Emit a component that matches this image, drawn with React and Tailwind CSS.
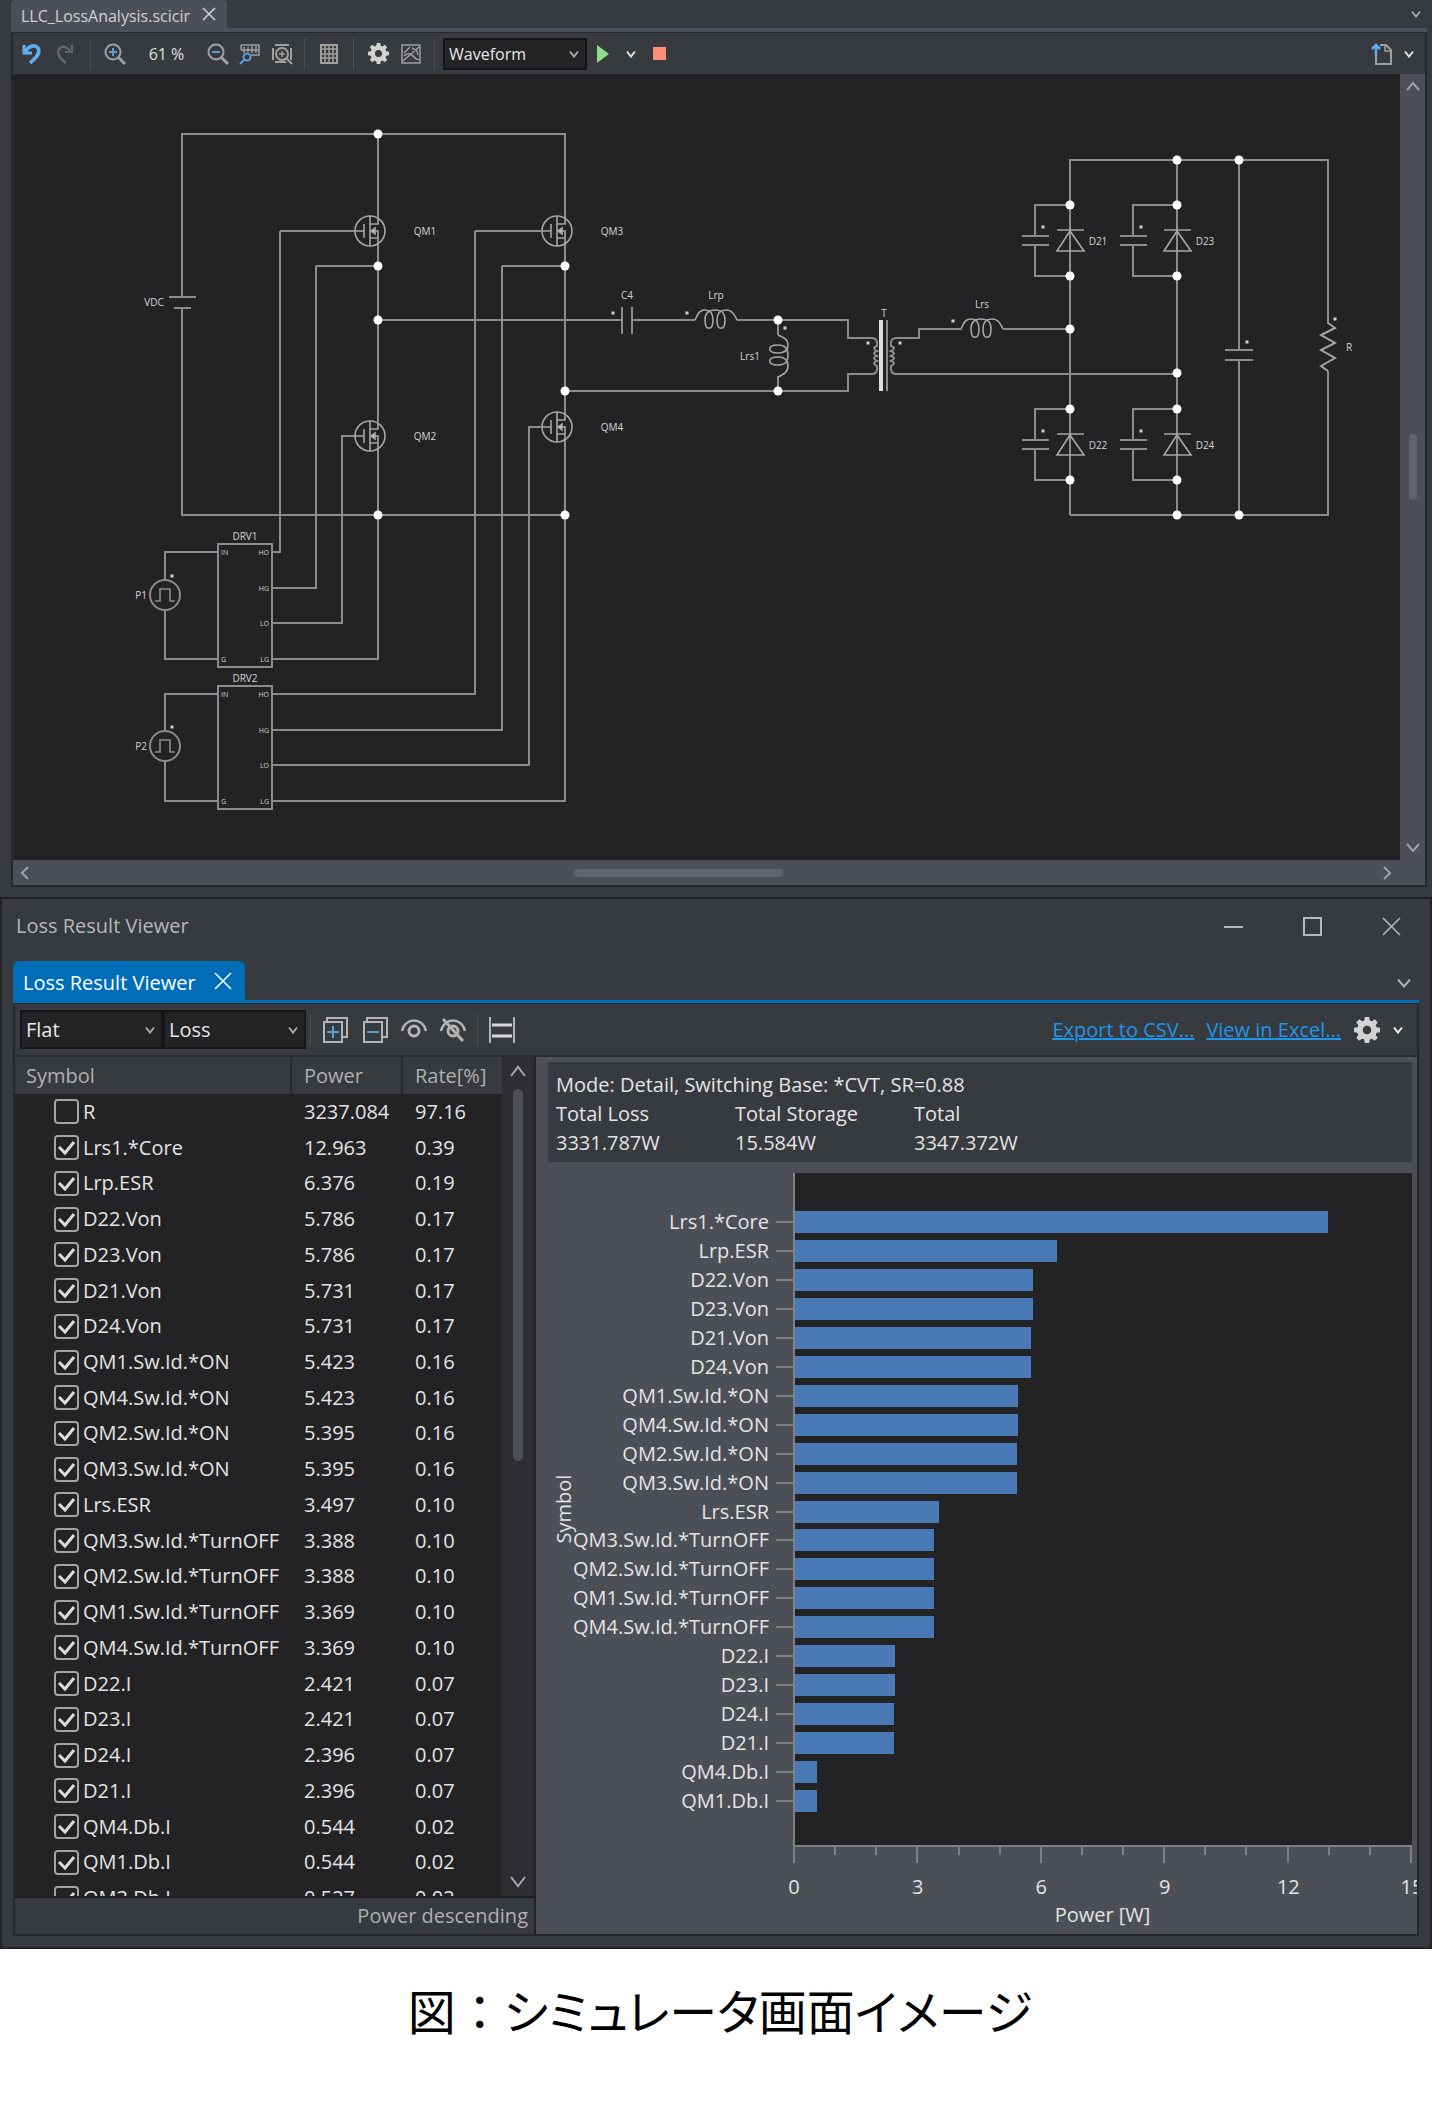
import React from "react";

const losses = [
  ["R", "3237.084", "97.16"],
  ["Lrs1.*Core", "12.963", "0.39"],
  ["Lrp.ESR", "6.376", "0.19"],
  ["D22.Von", "5.786", "0.17"],
  ["D23.Von", "5.786", "0.17"],
  ["D21.Von", "5.731", "0.17"],
  ["D24.Von", "5.731", "0.17"],
  ["QM1.Sw.Id.*ON", "5.423", "0.16"],
  ["QM4.Sw.Id.*ON", "5.423", "0.16"],
  ["QM2.Sw.Id.*ON", "5.395", "0.16"],
  ["QM3.Sw.Id.*ON", "5.395", "0.16"],
  ["Lrs.ESR", "3.497", "0.10"],
  ["QM3.Sw.Id.*TurnOFF", "3.388", "0.10"],
  ["QM2.Sw.Id.*TurnOFF", "3.388", "0.10"],
  ["QM1.Sw.Id.*TurnOFF", "3.369", "0.10"],
  ["QM4.Sw.Id.*TurnOFF", "3.369", "0.10"],
  ["D22.I", "2.421", "0.07"],
  ["D23.I", "2.421", "0.07"],
  ["D24.I", "2.396", "0.07"],
  ["D21.I", "2.396", "0.07"],
  ["QM4.Db.I", "0.544", "0.02"],
  ["QM1.Db.I", "0.544", "0.02"],
  ["QM3.Db.I", "0.527", "0.02"],
];

// the chart leaves out the load and the row below the fold
const bars = losses.slice(1, 22);
const AXIS_MAX = 15;

function Icon({ w = 24, h = 24, children, className = "" }) {
  return (
    <svg
      width={w}
      height={h}
      viewBox={`0 0 ${w} ${h}`}
      fill="none"
      stroke="currentColor"
      strokeWidth="2"
      className={`shrink-0 ${className}`}
      aria-hidden="true"
    >
      {children}
    </svg>
  );
}

const Chevron = ({ className }) => (
  <Icon w={10} h={8} className={className}>
    <path d="M1 1.5 5 6.5 9 1.5" />
  </Icon>
);

const Close = ({ size = 16 }) => (
  <Icon w={size} h={size}>
    <path d={`M1 1 ${size - 1} ${size - 1}M${size - 1} 1 1 ${size - 1}`} strokeWidth="1.6" />
  </Icon>
);

const Gear = ({ size }) => (
  <svg width={size} height={size} viewBox="0 0 24 24" fill="#d2d2d2" aria-hidden="true">
    <path
      fillRule="evenodd"
      d="M10 0h4l.6 3.2 1.9.8 2.7-1.9 2.7 2.7L20 7.5l.8 1.9L24 10v4l-3.2.6-.8 1.9 1.9 2.7-2.7 2.7-2.7-1.9-1.9.8L14 24h-4l-.6-3.2-1.9-.8-2.7 1.9-2.7-2.7L4 16.5l-.8-1.9L0 14v-4l3.2-.6L4 7.500 2.100 4.800l2.700-2.700L7.500 4l1.900-.8zM12 8a4 4 0 1 0 0 8 4 4 0 0 0 0-8z"
    />
  </svg>
);

function ToolButton({ label, className = "w-8", children }) {
  return (
    <button aria-label={label} className={`flex h-8 shrink-0 items-center justify-center ${className}`}>
      {children}
    </button>
  );
}

const Separator = ({ className = "mx-2" }) => (
  <div className={`h-8 w-px shrink-0 bg-[#4b4d54] ${className}`} />
);

function Combo({ label, value, className }) {
  return (
    <div className={`relative shrink-0 ${className}`}>
      <select
        aria-label={label}
        className="h-full w-full appearance-none border-2 border-[#161618] bg-[#232325] pl-1 text-[#e8e8e8] outline-none"
      >
        <option>{value}</option>
      </select>
      <Chevron className="pointer-events-none absolute top-1/2 right-2 -translate-y-1/2 text-[#a8a8a8]" />
    </div>
  );
}

/* ---------- schematic ---------- */

const Node = ({ x, y }) => <circle cx={x} cy={y} r="4.5" fill="#fff" stroke="none" />;
const Mark = ({ x, y }) => <rect x={x - 1.5} y={y - 1.5} width="3" height="3" fill="#d0d0d0" stroke="none" />;

function Label({ x, y, children, size = 10, anchor = "middle" }) {
  return (
    <text x={x} y={y} fontSize={size} textAnchor={anchor} dominantBaseline="central" fill="#d4d4d4" stroke="none">
      {children}
    </text>
  );
}

function Mosfet({ x, y, name }) {
  return (
    <g transform={`translate(${x} ${y})`}>
      <g strokeWidth="1.6" stroke="#a6a6a6">
        <circle r="15" />
        <path d="M-15 0H-6M-6-7V7M0-15V15M0-7H8V-13M0 0H8V13M0 7H8" />
        <path d="M1 0 5-3V3z" fill="#d0d0d0" />
      </g>
      <Label x={55} y={0}>{name}</Label>
    </g>
  );
}

function DiodeCell({ x, capX, y, name }) {
  return (
    <g>
      <path d={`M${x} ${y}H${capX}V${y + 31}M${capX} ${y + 40}V${y + 71}H${x}`} />
      <path d={`M${capX - 13} ${y + 31}h27M${capX - 13} ${y + 40}h27`} />
      <path d={`M${x - 13} ${y + 25}h27M${x} ${y + 26}l-13 20h27z`} stroke="#a6a6a6" strokeWidth="1.6" />
      <Mark x={capX + 8} y={y + 22} />
      <Label x={x + 28} y={y + 36}>{name}</Label>
    </g>
  );
}

function Driver({ y, name, pulse, pulseY, outs }) {
  const pins = ["HO", "HG", "LO", "LG"];
  return (
    <g>
      <rect x="218" y={y} width="54" height="123" />
      <Label x={245} y={y - 8}>{name}</Label>
      <path d={`M218 ${y + 8}H165V${pulseY - 15}M165 ${pulseY + 15}V${y + 115}H218`} />
      <circle cx="165" cy={pulseY} r="15" />
      <path d={`M155 ${pulseY + 6}h5v-12h10v12h5`} strokeWidth="1.6" />
      <Mark x={172} y={pulseY - 19} />
      <Label x={141} y={pulseY}>{pulse}</Label>
      <Label x={221} y={y + 8} size={7} anchor="start">IN</Label>
      <Label x={221} y={y + 115} size={7} anchor="start">G</Label>
      {pins.map((pin, i) => (
        <g key={pin}>
          <Label x={269} y={y + 8 + Math.round(i * 35.6)} size={7} anchor="end">{pin}</Label>
          <path d={`M272 ${y + 8 + Math.round(i * 35.6)}H${outs[i][0]}V${outs[i][1]}`} />
        </g>
      ))}
    </g>
  );
}

function Schematic() {
  return (
    <svg
      viewBox="13 74 1387 786"
      className="block h-auto min-w-0 flex-1 bg-[#232325] font-['Open_Sans',sans-serif]"
      fill="none"
      stroke="#8c8c8c"
      strokeWidth="2"
      role="img"
      aria-label="LLC converter circuit"
    >
      {/* supply and bridge rails */}
      <path d="M182 297V134H565V218M182 308V515H565M378 134V218M378 244V422M378 448V515M565 244V414M565 440V515" />
      <path d="M169 297H196M174 308H191" />
      <Label x={154} y={302}>VDC</Label>

      <path d="M280 231H355M541 231H475M342 436H355M529 427H541" />
      <path d="M378 266H316M565 266H502" />
      <Driver y={544} name="DRV1" pulse="P1" pulseY={595} outs={[[280, 231], [316, 266], [342, 435], [378, 515]]} />
      <Driver y={686} name="DRV2" pulse="P2" pulseY={746} outs={[[475, 231], [502, 266], [529, 426], [565, 515]]} />

      <Mosfet x={370} y={231} name="QM1" />
      <Mosfet x={370} y={436} name="QM2" />
      <Mosfet x={557} y={231} name="QM3" />
      <Mosfet x={557} y={427} name="QM4" />

      {/* resonant tank */}
      <path d="M378 320H622M632 320H695M737 320H848V338H872M565 391H848V374H872M622 307V334M632 307V334" />
      <path id="coil" d="M695 320C698 314 699 310 705 310C711 310 713 314 713 320C713 331 705 331 705 320C705 313 709 310 715 310C723 310 725 314 725 320C725 331 717 331 717 320C717 313 720 310 726 310C732 310 734 314 737 320" stroke="#a6a6a6" strokeWidth="1.6" />
      <use href="#coil" x="266" y="9" />
      <path d="M778 320V335M778 376V391" />
      <use href="#coil" transform="translate(1098 -360) rotate(90)" />
      <Label x={627} y={295}>C4</Label>
      <Label x={716} y={295}>Lrp</Label>
      <Label x={750} y={356}>Lrs1</Label>
      <Label x={982} y={304}>Lrs</Label>
      <Label x={884} y={313}>T</Label>
      <Mark x={613} y={313} />
      <Mark x={687} y={313} />
      <Mark x={785} y={328} />
      <Mark x={953} y={321} />

      {/* transformer */}
      <path d="M872 338C876 338 878 341 877 346q-6 2 0 5q-6 2 0 5q-6 2 0 5q-6 2 0 5C878 371 876 374 872 374" />
      <path d="M896 338C892 338 890 341 891 346q6 2 0 5q6 2 0 5q6 2 0 5q6 2 0 5C890 371 892 374 896 374" />
      <path d="M881 320V391" stroke="#dedede" strokeWidth="4" />
      <path d="M887 320V391" />
      <path d="M895 338H919V329H962M1003 329H1070M895 374H1177" />
      <Mark x={868} y={343} />
      <Mark x={900} y={343} />

      {/* rectifier and load */}
      <path d="M1070 515V160H1328V324M1177 160V515M1070 515H1328V371M1239 160V350M1239 360V515M1225 350H1253M1225 360H1253" />
      <path d="M1328 323 1335 328 1321 335 1335 343 1321 350 1335 358 1321 366 1328 371" stroke="#a6a6a6" />
      <DiodeCell x={1070} capX={1035} y={205} name="D21" />
      <DiodeCell x={1177} capX={1133} y={205} name="D23" />
      <DiodeCell x={1070} capX={1035} y={409} name="D22" />
      <DiodeCell x={1177} capX={1133} y={409} name="D24" />
      <Mark x={1247} y={342} />
      <Mark x={1335} y={319} />
      <Label x={1349} y={347}>R</Label>

      {[
        [378, 134], [378, 266], [378, 320], [378, 515], [565, 266], [565, 391], [565, 515],
        [778, 320], [778, 391], [1070, 205], [1070, 276], [1070, 329], [1070, 409], [1070, 480],
        [1177, 160], [1177, 205], [1177, 276], [1177, 373], [1177, 409], [1177, 480], [1177, 515],
        [1239, 160], [1239, 515],
      ].map(([x, y]) => (
        <Node key={`${x}-${y}`} x={x} y={y} />
      ))}
    </svg>
  );
}

function EditorToolbar() {
  return (
    <div className="flex h-[41px] items-center bg-[#373a3e] pl-[3px] text-[#a0a0a0]">
      <ToolButton label="Undo">
        <Icon w={20} h={22}>
          <g stroke="#61aeee" strokeWidth="3.5">
            <path d="M2 2V10H10" strokeWidth="3" />
            <path d="M3 9C6 3 13 1 16 5C19 10 14 15 8 20" />
          </g>
        </Icon>
      </ToolButton>
      <ToolButton label="Redo" className="w-[34px]">
        <Icon w={20} h={22} className="text-[#64666a]">
          <path d="M17 2V9H10" />
          <path d="M16 9C13 4 7 2 4 6C1 11 5 15 11 20" strokeWidth="2.5" />
        </Icon>
      </ToolButton>
      <Separator />
      <ToolButton label="Zoom in">
        <Icon w={22} h={22}>
          <circle cx="9" cy="9" r="7.5" />
          <path d="M14 14 21 21" strokeWidth="3" />
          <path d="M9 5V13M5 9H13" stroke="#5a9fd8" />
        </Icon>
      </ToolButton>
      <span className="w-[71px] text-center text-[16px] text-[#e0e0e0]">61 %</span>
      <ToolButton label="Zoom out">
        <Icon w={22} h={22}>
          <circle cx="9" cy="9" r="7.5" />
          <path d="M14 14 21 21" strokeWidth="3" />
          <path d="M5 9H13" stroke="#5a9fd8" />
        </Icon>
      </ToolButton>
      <ToolButton label="Zoom to area">
        <Icon w={22} h={22}>
          <path d="M2 2H20V12H12M2 2V7M2 7H10M5 4V10M9 4V9M13 3V10M17 3V10M4 7H20" strokeWidth="1.5" />
          <circle cx="8" cy="14" r="3.5" stroke="#5a9fd8" />
          <path d="M5.5 16.5 1 21" stroke="#5a9fd8" />
        </Icon>
      </ToolButton>
      <ToolButton label="Fit">
        <Icon w={22} h={22}>
          <circle cx="11" cy="11" r="6" />
          <path d="M11 8V14M8 11H14" strokeWidth="1.5" />
          <path d="M4 2H18M4 19H15M2 5V17M20 5V17M15 15 21 21" />
        </Icon>
      </ToolButton>
      <Separator className="mr-2 ml-[6px]" />
      <ToolButton label="Grid">
        <Icon w={20} h={20}>
          <path d="M2 1H18V19H2z" />
          <path d="M6 1V19M10 1V19M14 1V19M2 5H18M2 10H18M2 14H18" strokeWidth="1.5" />
        </Icon>
      </ToolButton>
      <Separator />
      <ToolButton label="Settings">
        <Gear size={21} />
      </ToolButton>
      <ToolButton label="Plot" className="w-[34px]">
        <Icon w={20} h={20}>
          <path d="M1 1H19V19H1zM3 9 9 3M11 4C16 6 16 7 17 11M3 12C6 9 10 9 12 12S16 15 18 16M2 17 18 3" strokeWidth="1.5" />
        </Icon>
      </ToolButton>
      <Separator className="mr-2 ml-[6px]" />
      <Combo label="Simulation" value="Waveform" className="h-8 w-36 text-[16px]" />
      <ToolButton label="Run">
        <svg width="12" height="18" viewBox="0 0 12 18" aria-hidden="true">
          <path d="M0 0 12 9 0 18z" fill="#8fdd8c" />
        </svg>
      </ToolButton>
      <ToolButton label="Run options" className="w-6 text-[#e0e0e0]">
        <Chevron />
      </ToolButton>
      <ToolButton label="Stop">
        <span className="size-[13px] bg-[#ff8e78]" />
      </ToolButton>
      <ToolButton label="Export" className="ml-auto w-8">
        <Icon w={22} h={22}>
          <path d="M10 2H16L21 7V21H6V12" />
          <path d="M15 2V8H21" strokeWidth="1.5" />
          <path d="M6 13V2M2 6 6 2 10 6" stroke="#61aeee" strokeWidth="2.5" />
        </Icon>
      </ToolButton>
      <ToolButton label="Export options" className="mr-1 w-6 text-[#e0e0e0]">
        <Chevron />
      </ToolButton>
    </div>
  );
}

const Arrow = ({ d }) => (
  <Icon w={16} h={16} className="text-[#a0a1a6]">
    <path d={d} />
  </Icon>
);

function Editor() {
  return (
    <section className="bg-[#373a3e] pr-[5px] pb-[10px] pl-[11px]">
      <div className="flex h-7 items-stretch justify-between">
        <div className="flex w-[216px] items-center gap-3 rounded-t bg-[#4d4f58] pl-[10px] text-[#d0d0d0]">
          <span className="pt-1 text-[16px]">LLC_LossAnalysis.scicir</span>
          <button aria-label="Close tab">
            <Close size={14} />
          </button>
        </div>
        <button aria-label="Tabs" className="pr-[6px] text-[#a0a0a0]">
          <Chevron />
        </button>
      </div>
      <div className="h-1 bg-[#4d4f58]" />
      <div className="border-2 border-t border-[#28282b]">
        <EditorToolbar />
        <div className="flex">
          <Schematic />
          <div className="flex w-[25px] flex-col items-center justify-between bg-[#4d4f58] py-1">
            <Arrow d="M2 12 8 5 14 12" />
            <div className="h-[66px] w-2 rounded-full bg-[#62646d]" />
            <Arrow d="M2 4 8 11 14 4" />
          </div>
        </div>
        <div className="flex h-[25px] items-center bg-[#4d4f58] pr-[30px] pl-1">
          <Arrow d="M11 2 5 8 11 14" />
          <div className="grow-[541]" />
          <div className="h-2 w-[209px] rounded-full bg-[#62646d]" />
          <div className="grow-[596]" />
          <Arrow d="M5 2 11 8 5 14" />
        </div>
      </div>
    </section>
  );
}

/* ---------- loss viewer ---------- */

function ViewerToolbar() {
  return (
    <div className="flex h-[53px] items-center border-b-2 border-[#2c2d30] pl-[5px] text-[#b4b4b4]">
      <Combo label="Grouping" value="Flat" className="h-[39px] w-[143px]" />
      <Combo label="Quantity" value="Loss" className="h-[39px] w-[143px]" />
      <Separator className="mr-1 ml-1" />
      <ToolButton label="Expand all" className="w-10">
        <Icon w={26} h={26}>
          <path d="M5 5V1H25V20H20" />
          <path d="M2 5H20V25H2z" />
          <path d="M11 9V21M5 15H17" stroke="#5a9fd8" />
        </Icon>
      </ToolButton>
      <ToolButton label="Collapse all" className="w-10">
        <Icon w={26} h={26}>
          <path d="M5 5V1H25V20H20" />
          <path d="M2 5H20V25H2z" />
          <path d="M5 15H17" stroke="#5a9fd8" />
        </Icon>
      </ToolButton>
      <ToolButton label="Show" className="w-[38px]">
        <Icon w={28} h={24}>
          <path d="M2 13C5 -1 23 -1 26 13" strokeWidth="2.5" />
          <circle cx="14" cy="13" r="5" strokeWidth="3" />
        </Icon>
      </ToolButton>
      <ToolButton label="Hide" className="w-10">
        <Icon w={28} h={24}>
          <path d="M2 13C5 -1 23 -1 26 13" strokeWidth="2.5" />
          <circle cx="14" cy="13" r="5" strokeWidth="3" />
          <path d="M4 1 24 23" strokeWidth="3" />
        </Icon>
      </ToolButton>
      <Separator className="mx-1" />
      <ToolButton label="Fit columns" className="w-10">
        <Icon w={28} h={26}>
          <path d="M2 0V26M26 0V26" />
          <path d="M4 8H24M4 19H24" stroke="#d8d8d8" strokeWidth="3" />
        </Icon>
      </ToolButton>
      <div className="ml-auto flex items-center gap-3 pr-[14px]">
        <a href="#csv" className="text-[#1c97ea] underline">Export to CSV...</a>
        <a href="#excel" className="text-[#1c97ea] underline">View in Excel...</a>
        <ToolButton label="Viewer settings" className="w-7">
          <Gear size={26} />
        </ToolButton>
        <button aria-label="More settings" className="text-[#f0f0f0]">
          <Chevron />
        </button>
      </div>
    </div>
  );
}

function LossTable() {
  return (
    <div className="flex w-[521px] shrink-0 flex-col border-r-2 border-[#232325]">
      <div className="flex h-[841px] overflow-hidden border-b-2 border-[#1c1c1e]">
        <table className="h-[859px] flex-1 table-fixed border-collapse bg-[#232325] text-left text-[#e4e4e4]">
          <thead>
            <tr className="h-[37px] bg-[#373a3e] text-[#b0b0b0]">
              <th className="w-[276px] border-r-2 border-[#2a2b2e] pl-[11px] font-normal">Symbol</th>
              <th className="w-[111px] border-r-2 border-[#2a2b2e] pl-3 font-normal">Power</th>
              <th className="pl-3 font-normal">Rate[%]</th>
            </tr>
          </thead>
          <tbody>
            {losses.map(([symbol, power, rate], i) => (
              <tr key={symbol}>
                <td className="p-0 pl-[39px]">
                  <label className="flex h-7 items-center gap-1">
                    <span className="relative size-[25px] shrink-0">
                      <input
                        type="checkbox"
                        defaultChecked={i > 0}
                        className="peer block size-full appearance-none rounded border-2 border-[#a4a4a4]"
                      />
                      <Icon
                        w={25}
                        h={25}
                        className="pointer-events-none absolute inset-0 text-[#dcdcdc] opacity-0 peer-checked:opacity-100"
                      >
                        <path d="M5 12 11 18 20 7" strokeWidth="3" />
                      </Icon>
                    </span>
                    {symbol}
                  </label>
                </td>
                <td className="p-0 pl-[13px]">{power}</td>
                <td className="p-0 pl-[13px]">{rate}</td>
              </tr>
            ))}
          </tbody>
        </table>
        <div className="flex w-[32px] flex-col items-center bg-[#2d2e32] py-2 text-[#a8a8a8]">
          <Icon w={18} h={12}>
            <path d="M2 11 9 2 16 11" />
          </Icon>
          <div className="mt-3 h-[372px] w-[10px] rounded-full bg-[#4d4f58]" />
          <Icon w={18} h={12} className="mt-auto">
            <path d="M2 1 9 10 16 1" />
          </Icon>
        </div>
      </div>
      <div className="flex h-9 items-center justify-end pr-[6px] text-[#b0b0b0]">Power descending</div>
    </div>
  );
}

function LossChart() {
  return (
    <div className="relative mt-[11px] flex flex-col pr-[5px]">
      <div className="flex h-[672px]">
        <div className="flex w-[259px] shrink-0 flex-col border-r-2 border-[#7e8085] pt-[35px] pb-[30px]">
          {bars.map(([symbol]) => (
            <div key={symbol} className="flex min-h-0 flex-1 items-center justify-end gap-[7px] whitespace-nowrap">
              {symbol}
              <span className="h-[2px] w-[17px] bg-[#7e8085]" />
            </div>
          ))}
        </div>
        <div className="flex min-w-0 flex-1 flex-col bg-[#232325] pt-[35px] pb-[30px]">
          {bars.map(([symbol, power]) => (
            <div key={symbol} className="flex min-h-0 flex-1 items-center">
              <div className="h-[22px] bg-[#4a7ab5]" style={{ width: `${(power / AXIS_MAX) * 100}%` }} />
            </div>
          ))}
        </div>
      </div>
      <div className="ml-[257px] flex h-5 justify-between border-t-2 border-[#7e8085]">
        {Array.from({ length: 16 }, (_, i) => (
          <span key={i} className={i % 3 ? "h-2 w-[2px] bg-[#7e8085]" : "h-4 w-[2px] bg-[#7e8085]"} />
        ))}
      </div>
      <div className="mt-2 ml-[258px] flex h-7 justify-between">
        {[0, 3, 6, 9, 12, 15].map((v) => (
          <span key={v} className="flex w-0 justify-center">{v}</span>
        ))}
      </div>
      <div className="ml-[257px] h-7 text-center">Power [W]</div>
      <span className="absolute top-[336px] left-[14px] -translate-y-1/2 rotate-180 leading-7 [writing-mode:vertical-rl]">
        Symbol
      </span>
    </div>
  );
}

function LossViewer() {
  return (
    <section className="border-2 border-[#232326] bg-[#373a3e] px-[11px] pb-[11px] text-[20px] leading-7">
      <header className="flex h-[62px] items-center justify-between pr-[18px] pb-2 pl-[3px] text-[#b8b8b8]">
        <h2>Loss Result Viewer</h2>
        <div className="flex gap-[60px]">
          <button aria-label="Minimize">
            <Icon w={19} h={19}>
              <path d="M0 10H19" />
            </Icon>
          </button>
          <button aria-label="Maximize">
            <Icon w={19} h={19}>
              <path d="M1 1H18V18H1z" />
            </Icon>
          </button>
          <button aria-label="Close window">
            <Close size={19} />
          </button>
        </div>
      </header>
      <div className="flex h-[39px] justify-between">
        <div className="flex w-[232px] items-center justify-between rounded-t-md bg-[#006db9] pr-[13px] pl-[10px] text-white">
          <span className="pt-1">Loss Result Viewer</span>
          <button aria-label="Close tab">
            <Close size={18} />
          </button>
        </div>
        <button aria-label="Tabs" className="pt-1 pr-2 text-[#b0b0b0]">
          <Icon w={14} h={10}>
            <path d="M1 1.5 7 8.5 13 1.5" />
          </Icon>
        </button>
      </div>
      <div className="h-[3px] bg-[#006db9]" />
      <div className="border-2 border-t border-[#28282b]">
        <ViewerToolbar />
        <div className="flex">
          <LossTable />
          <div className="min-w-0 flex-1 overflow-hidden bg-[#4d4f57] text-[#e4e4e4]">
            <div className="mt-[5px] mr-[5px] ml-[12px] h-[100px] bg-[#373a3e] px-2 pt-2 leading-[29px]">
              <p>Mode: Detail, Switching Base: *CVT, SR=0.88</p>
              <dl className="grid grid-cols-[179px_179px_1fr]">
                <div><dt>Total Loss</dt><dd>3331.787W</dd></div>
                <div><dt>Total Storage</dt><dd>15.584W</dd></div>
                <div><dt>Total</dt><dd>3347.372W</dd></div>
              </dl>
            </div>
            <LossChart />
          </div>
        </div>
      </div>
    </section>
  );
}

export default function App() {
  return (
    <main className="bg-white font-['Open_Sans','Noto_Sans',sans-serif]">
      <Editor />
      <LossViewer />
      <p
        lang="ja"
        className="pt-6 pb-[62px] pl-2 text-center font-['Noto_Sans_CJK_JP',sans-serif] text-[48px] leading-[72px] whitespace-nowrap text-black [font-feature-settings:'palt']"
      >
        図<span className="[font-feature-settings:normal]">：</span>シミュレータ画面イメージ
      </p>
    </main>
  );
}
